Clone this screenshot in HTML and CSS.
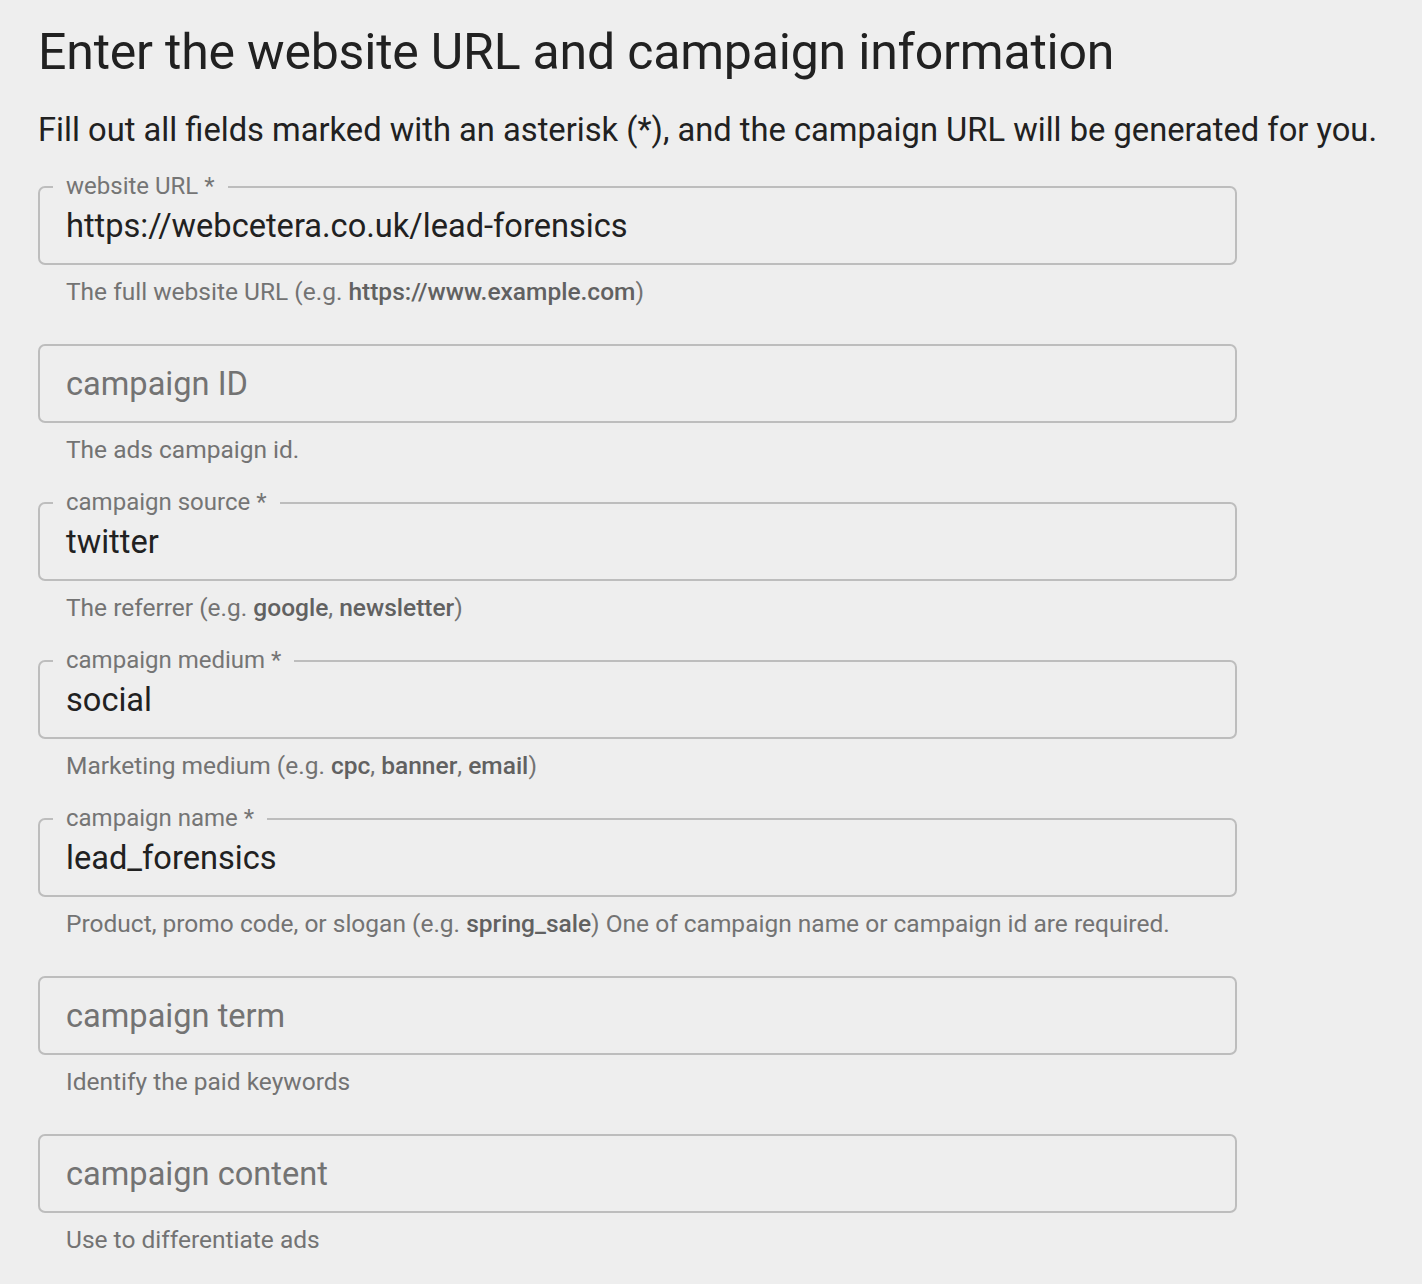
FILE: index.html
```html
<!DOCTYPE html>
<html>
<head>
	<title>Campaign URL Builder</title>
	<link rel="stylesheet" href="styles.css">
</head>
<body>
	<div class="container">
		<h1>Enter the website URL and campaign information</h1>
		<p class="intro">Fill out all fields marked with an asterisk (*), and the campaign URL will be generated for you.</p>

		<div class="fields">
			<div class="group">
				<div class="field">
					<label>website URL *</label>
					<span class="value">https://webcetera.co.uk/lead-forensics</span>
				</div>
				<p class="helper">The full website URL (e.g. <b>https://www.example.com</b>)</p>
			</div>

			<div class="group">
				<div class="field">
					<span class="placeholder">campaign ID</span>
				</div>
				<p class="helper">The ads campaign id.</p>
			</div>

			<div class="group">
				<div class="field">
					<label>campaign source *</label>
					<span class="value">twitter</span>
				</div>
				<p class="helper">The referrer (e.g. <b>google</b>, <b>newsletter</b>)</p>
			</div>

			<div class="group">
				<div class="field">
					<label>campaign medium *</label>
					<span class="value">social</span>
				</div>
				<p class="helper">Marketing medium (e.g. <b>cpc</b>, <b>banner</b>, <b>email</b>)</p>
			</div>

			<div class="group">
				<div class="field">
					<label>campaign name *</label>
					<span class="value">lead_forensics</span>
				</div>
				<p class="helper">Product, promo code, or slogan (e.g. <b>spring_sale</b>) One of campaign name or campaign id are required.</p>
			</div>

			<div class="group">
				<div class="field">
					<span class="placeholder">campaign term</span>
				</div>
				<p class="helper">Identify the paid keywords</p>
			</div>

			<div class="group">
				<div class="field">
					<span class="placeholder">campaign content</span>
				</div>
				<p class="helper">Use to differentiate ads</p>
			</div>
		</div>
	</div>
</body>
</html>
```

FILE: styles.css
```css
body {
	margin: 0;
	background-color: #eeeeee;
	font-family: Roboto, "Liberation Sans", sans-serif;
	color: #212121;
}
.container {
	padding: 20px 0 0 38px;
}
h1 {
	margin: 0;
	font-size: 50px;
	font-weight: 400;
	line-height: 64px;
	letter-spacing: -0.2px;
}
.intro {
	margin: 26px 0 0;
	font-size: 32.7px;
	line-height: 40px;
}
.fields {
	display: flex;
	flex-direction: column;
	gap: 38px;
	margin-top: 36px;
	width: 1199px;
}
.field {
	position: relative;
	box-sizing: border-box;
	height: 79px;
	border: 2px solid #bdbdbd;
	border-radius: 7px;
	padding: 0 26px;
	display: flex;
	align-items: center;
}
.field label {
	position: absolute;
	top: -16px;
	left: 13px;
	padding: 0 13px;
	background-color: #eeeeee;
	font-size: 24px;
	line-height: 28px;
	color: #757575;
}
.value {
	font-size: 32.6px;
	color: #212121;
}
.placeholder {
	font-size: 32.6px;
	color: #737373;
}
.helper {
	margin: 13px 0 0 28px;
	font-size: 24.5px;
	line-height: 28px;
	color: #737373;
}
.helper b {
	font-weight: 500;
	color: #616161;
}
```
